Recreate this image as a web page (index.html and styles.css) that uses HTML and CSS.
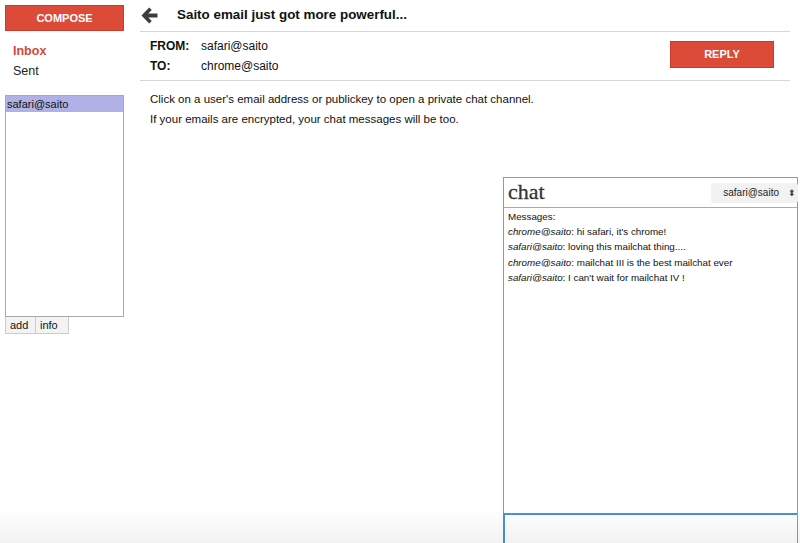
FILE: index.html
```html
<!DOCTYPE html>
<html>
<head>
<meta charset="utf-8">
<link rel="stylesheet" href="styles.css">
</head>
<body>
<div class="app">
  <aside class="sidebar">
    <div class="compose">COMPOSE</div>
    <nav class="nav">
      <div class="nav-item active">Inbox</div>
      <div class="nav-item">Sent</div>
    </nav>
    <div class="contacts">
      <div class="contact selected">safari@saito</div>
    </div>
    <div class="contact-btns">
      <div class="cbtn">add</div>
      <div class="cbtn">info</div>
    </div>
  </aside>
  <main class="main">
    <div class="title-row">
      <svg class="back" width="17" height="17" viewBox="0 0 17 17"><path d="M8.2 0.5 L0.5 8.5 L8.2 16.5 L10.8 13.9 L7.3 10.4 L16.5 10.4 L16.5 6.6 L7.3 6.6 L10.8 3.1 Z" fill="#3d3d3d"/></svg>
      <h1 class="title">Saito email just got more powerful...</h1>
    </div>
    <div class="meta">
      <div class="addrs">
        <div class="addr"><span class="lbl">FROM:</span><span>safari@saito</span></div>
        <div class="addr"><span class="lbl">TO:</span><span>chrome@saito</span></div>
      </div>
      <div class="reply">REPLY</div>
    </div>
    <div class="body">
      <p>Click on a user's email address or publickey to open a private chat channel.</p>
      <p>If your emails are encrypted, your chat messages will be too.</p>
    </div>
  </main>
</div>
<div class="chat">
  <div class="chat-head">
    <span class="chat-title">chat</span>
    <div class="chat-select"><span>safari@saito</span><span class="arrows">&#x2B0D;</span></div>
  </div>
  <div class="chat-msgs">
    <div class="msg">Messages:</div>
    <div class="msg"><i>chrome@saito</i>: hi safari, it's chrome!</div>
    <div class="msg"><i>safari@saito</i>: loving this mailchat thing....</div>
    <div class="msg"><i>chrome@saito</i>: mailchat III is the best mailchat ever</div>
    <div class="msg"><i>safari@saito</i>: I can't wait for mailchat IV !</div>
  </div>
  <div class="chat-input"></div>
</div>
<div class="fade"></div>
</body>
</html>
```
FILE: styles.css
```css
html, body {
  margin: 0;
  padding: 0;
  background: #fff;
  font-family: "Liberation Sans", Arial, sans-serif;
  color: #222;
  width: 800px;
  height: 543px;
  overflow: hidden;
}
.app {
  display: flex;
}
.sidebar {
  width: 119px;
  padding: 5px 0 0 5px;
  flex: none;
}
.compose {
  height: 26px;
  background: #dc4a38;
  border: 1px solid #c93c2b;
  box-sizing: border-box;
  color: #fff;
  font-weight: bold;
  font-size: 11px;
  line-height: 24px;
  text-align: center;
}
.nav {
  margin-top: 10px;
  padding-left: 8px;
}
.nav-item {
  font-size: 12.5px;
  line-height: 20px;
  color: #222;
}
.nav-item.active {
  color: #d14836;
  font-weight: bold;
}
.contacts {
  margin-top: 14px;
  height: 222px;
  border: 1px solid #aaa;
  box-sizing: border-box;
}
.contact {
  font-size: 11px;
  line-height: 16px;
  padding-left: 1px;
  color: #111;
}
.contact.selected {
  background: #b0b1e6;
}
.contact-btns {
  display: flex;
}
.cbtn {
  font-size: 11px;
  line-height: 16px;
  height: 17px;
  box-sizing: border-box;
  padding: 0 4px;
  background: #f3f3f3;
  border: 1px solid #ccc;
  border-top: none;
  color: #111;
}
.cbtn:first-child {
  width: 31px;
}
.cbtn:last-child {
  width: 33px;
  border-left: none;
}
.main {
  margin-left: 16px;
  width: 650px;
}
.title-row {
  display: flex;
  align-items: center;
  height: 31px;
  border-bottom: 1px solid #d6d6d6;
}
.back {
  margin-left: 1px;
  margin-top: -1px;
}
.title {
  margin: 0 0 0 19px;
  font-size: 13.4px;
  font-weight: bold;
  color: #111;
  margin-top: -2px;
}
.meta {
  display: flex;
  justify-content: space-between;
  border-bottom: 1px solid #d6d6d6;
  padding: 4px 16px 4px 10px;
}
.addr {
  font-size: 12px;
  line-height: 20px;
  color: #111;
}
.lbl {
  display: inline-block;
  width: 51px;
  font-weight: bold;
}
.reply {
  margin-top: 5px;
  width: 104px;
  height: 27px;
  box-sizing: border-box;
  background: #dc4a38;
  border: 1px solid #c93c2b;
  color: #fff;
  font-size: 11px;
  font-weight: bold;
  line-height: 25px;
  text-align: center;
}
.body {
  padding: 8px 0 0 10px;
}
.body p {
  margin: 0;
  font-size: 11.5px;
  line-height: 20px;
  color: #111;
}
.chat {
  position: absolute;
  left: 503px;
  top: 177px;
  width: 295px;
  height: 380px;
  border: 1px solid #999;
  box-sizing: border-box;
  background: #fff;
  display: flex;
  flex-direction: column;
}
.chat-head {
  height: 29px;
  flex: none;
  border-bottom: 1px solid #aaa;
  display: flex;
  align-items: center;
  justify-content: space-between;
}
.chat-title {
  font-family: "Liberation Serif", "DejaVu Serif", serif;
  font-size: 22px;
  color: #333;
  margin-left: 4px;
  margin-top: -2px;
  -webkit-text-stroke: 0.3px #333;
}
.chat-select {
  width: 87px;
  height: 20px;
  background: #f2f2f2;
  border-radius: 3px;
  font-size: 10px;
  color: #222;
  display: flex;
  align-items: center;
  justify-content: flex-end;
  box-sizing: border-box;
  padding-right: 2px;
  gap: 9px;
  margin-right: -1px;
}
.arrows {
  font-size: 9px;
  color: #444;
}
.chat-msgs {
  flex: 1;
  padding: 1px 4px;
}
.msg {
  font-size: 9.8px;
  line-height: 15.2px;
  color: #111;
}
.chat-input {
  flex: none;
  height: 43px;
  border: 2px solid #4b8fdc;
  border-right: none;
  margin-left: -1px;
  box-sizing: border-box;
  background: #fff;
}
.fade {
  position: absolute;
  left: 0;
  bottom: 0;
  width: 800px;
  height: 35px;
  background: linear-gradient(to bottom, rgba(0,0,0,0), rgba(0,0,0,0.05));
  pointer-events: none;
}
```
